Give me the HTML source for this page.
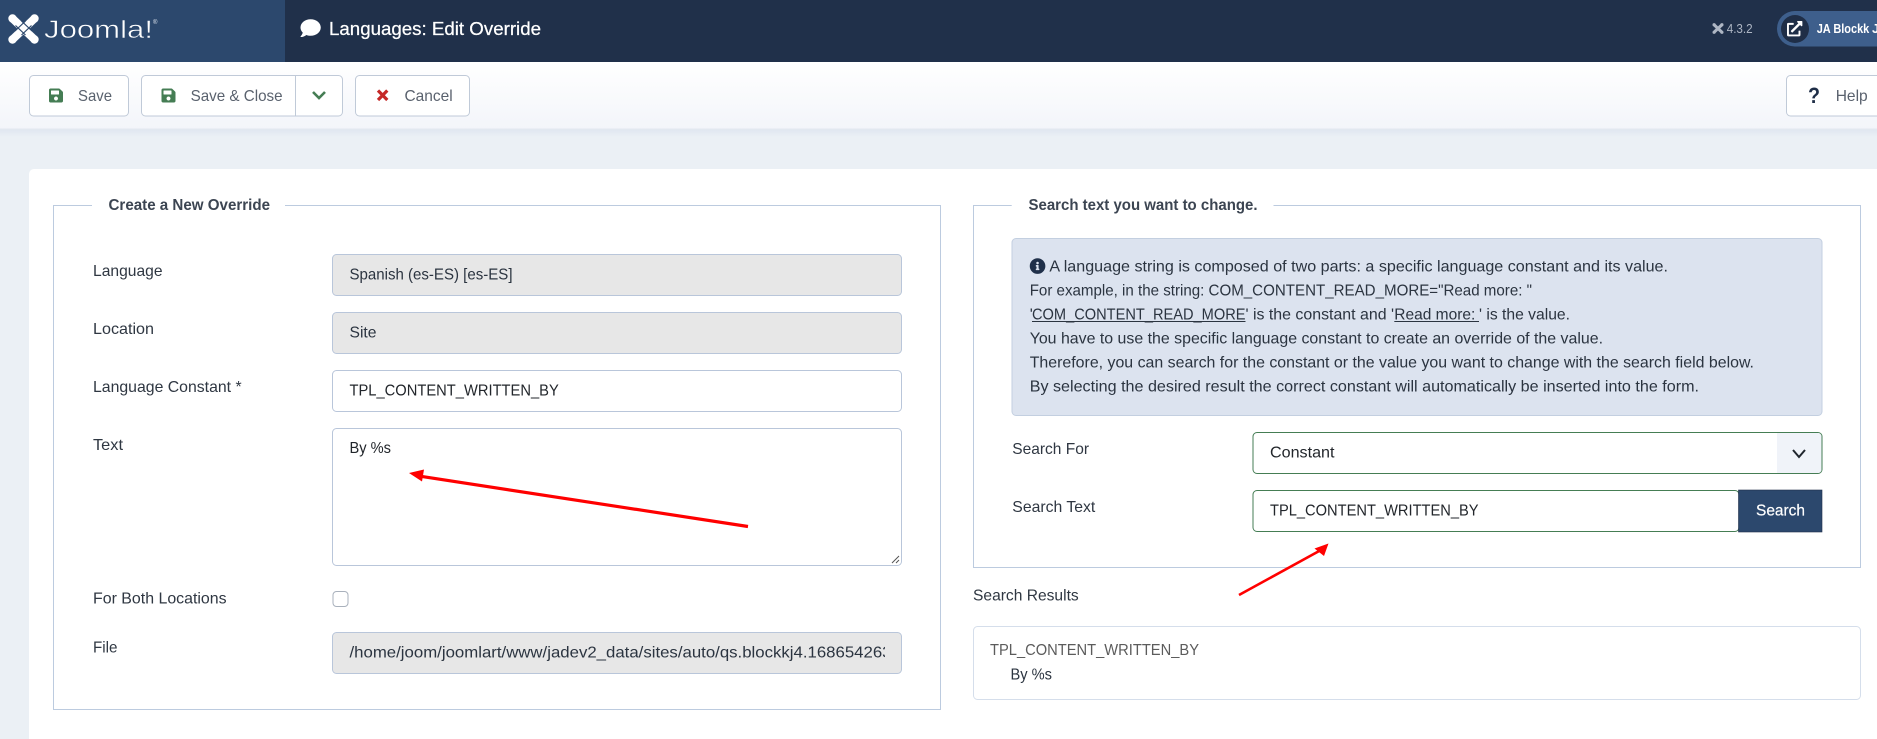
<!DOCTYPE html>
<html lang="en">
<head>
<meta charset="utf-8">
<title>Languages: Edit Override</title>
<style>
html,body{margin:0;padding:0;width:1877px;height:739px;overflow:hidden;background:#ebf0f5}
svg{display:block}
text{font-family:"Liberation Sans",Arial,sans-serif;font-size:16px;white-space:pre}
.l{fill:#2f3742}
.v{fill:#22262b}
.b{fill:#5a626e}
.h{font-weight:bold;fill:#3c4552}
.i{fill:#2b3440}
</style>
</head>
<body>
<svg width="1877" height="739" viewBox="0 0 1877 739" xmlns="http://www.w3.org/2000/svg">
<defs>
<linearGradient id="tb" x1="0" y1="0" x2="0" y2="1"><stop offset="0" stop-color="#fff"/><stop offset="1" stop-color="#f3f5fa"/></linearGradient>
<linearGradient id="sh" x1="0" y1="0" x2="0" y2="1"><stop offset="0" stop-color="#dfe6f0"/><stop offset="1" stop-color="#ebf0f5"/></linearGradient>
<clipPath id="fc"><rect x="349" y="636" width="536" height="36"/></clipPath>
<g id="save"><path transform="scale(.03125)" d="M433.941 129.941l-83.882-83.882A48 48 0 0 0 316.118 32H48C21.49 32 0 53.49 0 80v352c0 26.51 21.49 48 48 48h352c26.51 0 48-21.49 48-48V163.882a48 48 0 0 0-14.059-33.941zM224 416c-35.346 0-64-28.654-64-64 0-35.346 28.654-64 64-64s64 28.654 64 64c0 35.346-28.654 64-64 64zm96-304.52V212c0 6.627-5.373 12-12 12H76c-6.627 0-12-5.373-12-12V108c0-6.627 5.373-12 12-12h228.52c3.183 0 6.235 1.264 8.485 3.515l3.48 3.48A11.996 11.996 0 0 1 320 111.48z"/></g>
</defs>

<!-- page -->
<rect width="1877" height="739" fill="#ebf0f5"/>
<rect x="0" y="129" width="1877" height="8" fill="url(#sh)"/>
<rect x="29" y="169" width="1860" height="600" rx="5" fill="#fff"/>

<!-- header -->
<rect width="1877" height="62" fill="#20304a"/>
<rect width="285" height="62" fill="#2c486d"/>

<!-- joomla mark -->
<g transform="translate(8.5 14)">
  <path d="M4.5 5 L25.5 25 M25.5 5 L4.5 25" fill="none" stroke="#fff" stroke-width="8"/>
  <g fill="none" stroke="#2c486d" stroke-width="1.2">
    <path d="M7 11.5 L17 21"/><path d="M13 7 L23.5 17"/>
    <path d="M23 11.5 L13 21"/><path d="M17 7 L6.5 17"/>
  </g>
  <circle cx="4" cy="4.5" r="4.2" fill="#fff"/><circle cx="26" cy="4.5" r="4.2" fill="#fff"/>
  <circle cx="4" cy="25.5" r="4.2" fill="#fff"/><circle cx="26" cy="25.5" r="4.2" fill="#fff"/>
</g>
<text x="44" y="38" style="font-size:25px" textLength="109" lengthAdjust="spacingAndGlyphs" fill="#fff" stroke="#2c486d" stroke-width=".5">Joomla!</text>
<text x="153" y="24" style="font-size:6px" fill="#dfe5ee">®</text>

<!-- title -->
<path transform="translate(300.5 18) scale(.0396)" fill="#fff" d="M256 32C114.6 32 0 125.1 0 240c0 49.6 21.4 95 57 130.7C44.5 421.1 2.7 466 2.2 466.5c-2.2 2.3-2.8 5.7-1.5 8.7S4.8 480 8 480c66.3 0 116-31.8 140.6-51.4 32.7 12.3 69 19.4 107.4 19.4 141.4 0 256-93.1 256-208S397.4 32 256 32z"/>
<text x="329" y="35" style="font-size:18px" textLength="212" lengthAdjust="spacingAndGlyphs" fill="#fff" stroke="#fff" stroke-width=".25">Languages: Edit Override</text>

<!-- version -->
<g transform="translate(1712.5 23)">
  <path d="M1.8 2 L9.2 9 M9.2 2 L1.8 9" fill="none" stroke="#aeb6c4" stroke-width="3"/>
  <circle cx="1.6" cy="1.7" r="1.6" fill="#aeb6c4"/><circle cx="9.4" cy="1.7" r="1.6" fill="#aeb6c4"/>
  <circle cx="1.6" cy="9.3" r="1.6" fill="#aeb6c4"/><circle cx="9.4" cy="9.3" r="1.6" fill="#aeb6c4"/>
</g>
<text x="1726.7" y="33" style="font-size:13px" textLength="26" lengthAdjust="spacingAndGlyphs" fill="#aeb6c4">4.3.2</text>

<!-- user pill -->
<rect x="1777" y="11" width="140" height="35.5" rx="17.7" fill="#3e5f8c"/>
<circle cx="1795" cy="29" r="14" fill="#1f2e47"/>
<path transform="translate(1787 21) scale(.03)" fill="#fff" d="M432,320H400a16,16,0,0,0-16,16V448H64V128H208a16,16,0,0,0,16-16V80a16,16,0,0,0-16-16H48A48,48,0,0,0,0,112V464a48,48,0,0,0,48,48H400a48,48,0,0,0,48-48V336A16,16,0,0,0,432,320ZM488,0h-128c-21.37,0-32.05,25.91-17,41l35.73,35.73L135,320.37a24,24,0,0,0,0,34L157.67,377a24,24,0,0,0,34,0L435.28,133.32,471,169c15,15,41,4.5,41-17V24A24,24,0,0,0,488,0Z"/>
<text x="1816.7" y="33" style="font-size:13px;font-weight:bold" textLength="52.6" lengthAdjust="spacingAndGlyphs" fill="#fff">JA Blockk</text>
<text x="1872" y="33" style="font-size:13px;font-weight:bold" fill="#fff">J</text>

<!-- toolbar -->
<rect y="62" width="1877" height="67" fill="url(#tb)"/>
<rect y="128.5" width="1877" height="1" fill="#e3e8f0"/>

<g fill="#fff" stroke="#c0cad8">
  <rect x="29.5" y="75.5" width="99" height="40.5" rx="4"/>
  <rect x="141.5" y="75.5" width="201" height="40.5" rx="4"/>
  <rect x="355.5" y="75.5" width="114" height="40.5" rx="4"/>
  <rect x="1786.5" y="75.5" width="120" height="40.5" rx="4"/>
</g>
<rect x="295" y="75.5" width="1" height="40.5" fill="#c0cad8"/>

<use href="#save" transform="translate(49 87.5)" fill="#457d54"/>
<text x="78" y="101" class="b" textLength="34" lengthAdjust="spacingAndGlyphs">Save</text>
<use href="#save" transform="translate(161.5 87.5)" fill="#457d54"/>
<text x="190.6" y="101" class="b" textLength="92" lengthAdjust="spacingAndGlyphs">Save &amp; Close</text>
<path d="M313 92 L319 98 L325 92" fill="none" stroke="#457d54" stroke-width="2.6"/>
<path d="M378 90.5 L387.3 100 M387.3 90.5 L378 100" fill="none" stroke="#c52827" stroke-width="3.2"/>
<text x="404.5" y="101" class="b" textLength="48.2" lengthAdjust="spacingAndGlyphs">Cancel</text>
<text x="1808" y="103" style="font-size:22px;font-weight:bold" textLength="12" lengthAdjust="spacingAndGlyphs" fill="#1f2e47">?</text>
<text x="1835.7" y="101" class="b" textLength="32" lengthAdjust="spacingAndGlyphs">Help</text>

<!-- fieldset left -->
<path d="M92 205.5 H53.5 V709.5 H940.5 V205.5 H285" fill="none" stroke="#bccbdf"/>
<text x="108.5" y="210" class="h" textLength="161.5" lengthAdjust="spacingAndGlyphs">Create a New Override</text>

<text x="93" y="276" class="l" textLength="69.5" lengthAdjust="spacingAndGlyphs">Language</text>
<rect x="332.5" y="254.5" width="569" height="41" rx="4" fill="#e7e7e7" stroke="#b9c6da"/>
<text x="349.5" y="279.5" class="i" textLength="163" lengthAdjust="spacingAndGlyphs">Spanish (es-ES) [es-ES]</text>

<text x="93" y="334" class="l" textLength="61" lengthAdjust="spacingAndGlyphs">Location</text>
<rect x="332.5" y="312.5" width="569" height="41" rx="4" fill="#e7e7e7" stroke="#b9c6da"/>
<text x="349.5" y="337.5" class="i" textLength="27" lengthAdjust="spacingAndGlyphs">Site</text>

<text x="93" y="392" class="l" textLength="148.6" lengthAdjust="spacingAndGlyphs">Language Constant *</text>
<rect x="332.5" y="370.5" width="569" height="41" rx="4" fill="#fff" stroke="#b9c6da"/>
<text x="349.5" y="395.5" class="v" textLength="209.3" lengthAdjust="spacingAndGlyphs">TPL_CONTENT_WRITTEN_BY</text>

<text x="93" y="450" class="l" textLength="30" lengthAdjust="spacingAndGlyphs">Text</text>
<rect x="332.5" y="428.5" width="569" height="137" rx="4" fill="#fff" stroke="#b9c6da"/>
<text x="349.5" y="453" class="v" textLength="41.5" lengthAdjust="spacingAndGlyphs">By %s</text>
<path d="M892 563 L899 556 M896 563 L899 560" stroke="#555" stroke-width="1" fill="none"/>

<text x="93" y="603.5" class="l" textLength="133.6" lengthAdjust="spacingAndGlyphs">For Both Locations</text>
<rect x="333" y="591.5" width="15" height="15" rx="3.5" fill="#fff" stroke="#a9b1bc"/>

<text x="93" y="652.5" class="l" textLength="24.5" lengthAdjust="spacingAndGlyphs">File</text>
<rect x="332.5" y="632.5" width="569" height="41" rx="4" fill="#e7e7e7" stroke="#b9c6da"/>
<g clip-path="url(#fc)"><text x="349.5" y="657.5" class="i" textLength="542" lengthAdjust="spacingAndGlyphs">/home/joom/joomlart/www/jadev2_data/sites/auto/qs.blockkj4.168654263</text></g>

<!-- fieldset right -->
<path d="M1011.7 205.5 H973.5 V567.5 H1860.5 V205.5 H1273.5" fill="none" stroke="#bccbdf"/>
<text x="1028.5" y="210" class="h" textLength="229" lengthAdjust="spacingAndGlyphs">Search text you want to change.</text>

<rect x="1012" y="238.5" width="810" height="177" rx="4" fill="#dce3ef" stroke="#c3cfe0"/>
<path transform="translate(1029.5 258) scale(.0315)" fill="#20304a" d="M256 8C119.043 8 8 119.083 8 256c0 136.997 111.043 248 248 248s248-111.003 248-248C504 119.083 392.957 8 256 8zm0 110c23.196 0 42 18.804 42 42s-18.804 42-42 42-42-18.804-42-42 18.804-42 42-42zm56 254c0 6.627-5.373 12-12 12h-88c-6.627 0-12-5.373-12-12v-24c0-6.627 5.373-12 12-12h12v-64h-12c-6.627 0-12-5.373-12-12v-24c0-6.627 5.373-12 12-12h64c6.627 0 12 5.373 12 12v100h12c6.627 0 12 5.373 12 12v24z"/>
<text x="1049.4" y="271.5" class="i" textLength="618.6" lengthAdjust="spacingAndGlyphs">A language string is composed of two parts: a specific language constant and its value.</text>
<text x="1029.7" y="295.5" class="i" textLength="502.3" lengthAdjust="spacingAndGlyphs">For example, in the string: COM_CONTENT_READ_MORE="Read more: "</text>
<text x="1029.7" y="319.5" class="i">'</text>
<text x="1032" y="319.5" class="i" textLength="213.5" lengthAdjust="spacingAndGlyphs">COM_CONTENT_READ_MORE</text>
<text x="1245.5" y="319.5" class="i" textLength="148.5" lengthAdjust="spacingAndGlyphs">' is the constant and '</text>
<text x="1394.3" y="319.5" class="i" textLength="81" lengthAdjust="spacingAndGlyphs">Read more:</text>
<text x="1479" y="319.5" class="i" textLength="91" lengthAdjust="spacingAndGlyphs">' is the value.</text>
<rect x="1032" y="321" width="213.5" height="1" fill="#2b3440"/>
<rect x="1394.3" y="321" width="84.7" height="1" fill="#2b3440"/>
<text x="1029.7" y="343.5" class="i" textLength="573.3" lengthAdjust="spacingAndGlyphs">You have to use the specific language constant to create an override of the value.</text>
<text x="1029.7" y="367.5" class="i" textLength="724.3" lengthAdjust="spacingAndGlyphs">Therefore, you can search for the constant or the value you want to change with the search field below.</text>
<text x="1029.7" y="391.5" class="i" textLength="669.3" lengthAdjust="spacingAndGlyphs">By selecting the desired result the correct constant will automatically be inserted into the form.</text>

<text x="1012.3" y="454" class="l" textLength="76.7" lengthAdjust="spacingAndGlyphs">Search For</text>
<rect x="1253" y="432.5" width="569" height="41" rx="4" fill="#fff" stroke="#457d54"/>
<path d="M1777 433 H1818 a3.5 3.5 0 0 1 3.5 3.5 V469.5 a3.5 3.5 0 0 1 -3.5 3.5 H1777 Z" fill="#f0f3f9"/>
<path d="M1793 450 L1799 457 L1805 450" fill="none" stroke="#20262e" stroke-width="2"/>
<text x="1270" y="457.7" class="v" textLength="64.5" lengthAdjust="spacingAndGlyphs">Constant</text>

<text x="1012.3" y="512" class="l" textLength="83" lengthAdjust="spacingAndGlyphs">Search Text</text>
<rect x="1253" y="490.5" width="486" height="41" rx="4" fill="#fff" stroke="#457d54"/>
<rect x="1738.5" y="490" width="83.5" height="42" fill="#2c486d" stroke="#20304a" stroke-width=".6"/>
<text x="1270" y="515.5" class="v" textLength="208.6" lengthAdjust="spacingAndGlyphs">TPL_CONTENT_WRITTEN_BY</text>
<text x="1756" y="515.5" textLength="49" lengthAdjust="spacingAndGlyphs" fill="#fff" stroke="#fff" stroke-width=".2">Search</text>

<text x="973" y="600.5" class="l" textLength="105.7" lengthAdjust="spacingAndGlyphs">Search Results</text>
<rect x="973.5" y="626.5" width="887" height="73" rx="4" fill="#fff" stroke="#d5deeb"/>
<text x="990" y="655" textLength="209" lengthAdjust="spacingAndGlyphs" fill="#5c5c5c">TPL_CONTENT_WRITTEN_BY</text>
<text x="1010.5" y="679.5" class="i" textLength="41.5" lengthAdjust="spacingAndGlyphs">By %s</text>

<!-- arrows -->
<path d="M748 526.5 L420 476.2" stroke="#f00" stroke-width="3.2" fill="none"/>
<path d="M409 473 L424 469.5 L422 481.5 Z" fill="#f00"/>
<path d="M1239 595 L1321 550" stroke="#f00" stroke-width="2.6" fill="none"/>
<path d="M1328.5 543.5 L1324 556 L1314.5 548.5 Z" fill="#f00"/>
</svg>
</body>
</html>
